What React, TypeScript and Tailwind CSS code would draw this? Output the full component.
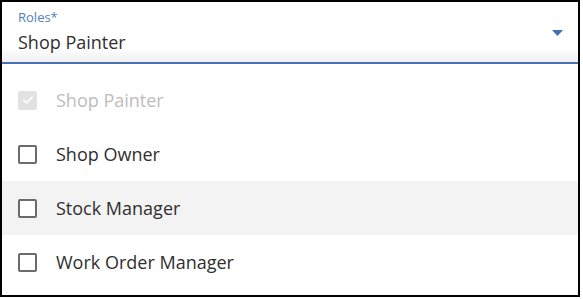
import React from "react";

const items = [
  { label: "Shop Painter", disabled: true, checked: true },
  { label: "Shop Owner" },
  { label: "Stock Manager", hover: true },
  { label: "Work Order Manager" },
];

function Box({ disabled }: { checked?: boolean; disabled?: boolean }) {
  if (disabled) {
    return (
      <div className="w-[19px] h-[19px] rounded-[2px] bg-[#e2e2e2] flex items-center justify-center shrink-0">
        <svg width="12" height="10" viewBox="0 0 12 10">
          <path d="M1.5 5.2 L4.5 8 L10.5 1.8" fill="none" stroke="#ffffff" strokeWidth="1.6" />
        </svg>
      </div>
    );
  }
  return <div className="w-[19px] h-[19px] rounded-[2px] border-2 border-[#6b6b6b] shrink-0 bg-white" />;
}

export default function App() {
  return (
    <div className="w-[583px] h-[299px] bg-white" style={{ fontFamily: '"Open Sans", sans-serif' }}>
      <div className="w-[580px] h-[297px] border-2 border-black flex flex-col">
        <div className="relative h-[62px] px-[16px] pt-[7px] bg-gradient-to-b from-white from-75% to-[#f0f0f0] border-b-2 border-[#4a72b0]">
          <div className="text-[13px] leading-[16px] text-[#4f7fc0]">Roles*</div>
          <div className="text-[18px] leading-[24px] mt-[5px] text-[#2f2f2f]">Shop Painter</div>
          <svg className="absolute left-[550px] top-[28px]" width="11" height="6" viewBox="0 0 11 6">
            <path d="M0 0 L11 0 L5.5 6 Z" fill="#3f6fb5" />
          </svg>
        </div>
        <div className="pt-[9px] flex flex-col">
          {items.map((it) => (
            <div
              key={it.label}
              className={`h-[54px] flex items-center gap-[19px] pl-[16px] ${it.hover ? "bg-[#f3f3f3]" : ""}`}
            >
              <Box checked={it.checked} disabled={it.disabled} />
              <span className={`text-[18px] ${it.disabled ? "text-[#bdbdbd]" : "text-[#2f2f2f]"}`}>{it.label}</span>
            </div>
          ))}
        </div>
      </div>
    </div>
  );
}
